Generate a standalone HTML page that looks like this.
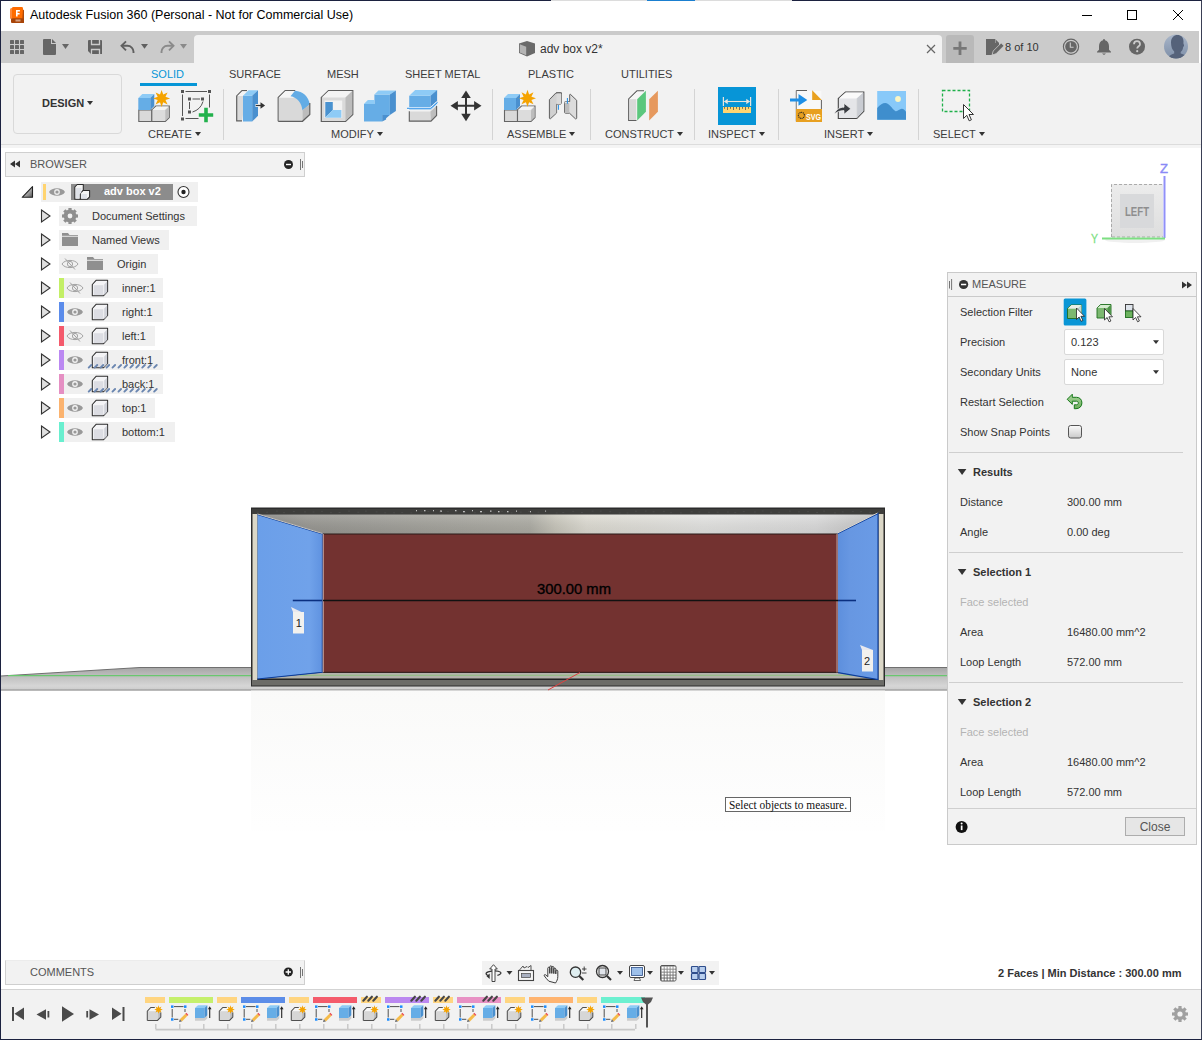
<!DOCTYPE html>
<html><head><meta charset="utf-8">
<style>
*{margin:0;padding:0;box-sizing:border-box}
html,body{width:1202px;height:1040px;overflow:hidden;background:#fff;font-family:"Liberation Sans",sans-serif;color:#3c3c3c}
.a{position:absolute}
.t{position:absolute;white-space:nowrap;font-size:11px;line-height:13px}
svg{position:absolute;overflow:visible}
#frame{position:absolute;left:0;top:0;width:1202px;height:1040px;border:1px solid #1c2240;border-right-color:#3a3f55;pointer-events:none;z-index:100}
.tab{font-size:11px;color:#3c3c3c}
.lbl{font-size:11px;color:#3c3c3c}
.dd{display:inline-block;width:0;height:0;border-left:3px solid transparent;border-right:3px solid transparent;border-top:4px solid #333;vertical-align:2px;margin-left:3px}
.sep{position:absolute;width:1px;background:#d4d4d4;top:89px;height:51px}
.row{position:absolute;height:20px;background:#f0f0f0}
.mrow{position:absolute;font-size:11px;color:#333}
</style></head><body>
<div id="frame"></div>
<div class="a" style="left:551px;top:0;width:241px;height:1px;background:#dcdcdc;z-index:101"></div>
<div class="a" style="left:647px;top:0;width:48px;height:1px;background:#1a7fd0;z-index:102"></div>

<!-- title bar -->
<div class="a" style="left:0;top:0;width:1202px;height:31px;background:#fff"></div>
<div class="t" style="left:30px;top:8px;font-size:12.5px;line-height:15px;color:#000">Autodesk Fusion 360 (Personal - Not for Commercial Use)</div>

<!-- tab bar -->
<div class="a" style="left:1px;top:31px;width:1198px;height:32px;background:#cbcbcb"></div>
<div class="a" style="left:194px;top:35px;width:748px;height:28px;background:#f2f2f2;border-radius:4px 4px 0 0"></div>
<div class="a" style="left:946px;top:35px;width:28px;height:28px;background:#b9b9b9;border-radius:3px 3px 0 0"></div>
<div class="t" style="left:540px;top:41.7px;font-size:12px;line-height:14px;color:#333">adv box v2*</div>
<div class="t" style="left:1005px;top:40.5px;font-size:11px;line-height:13px;color:#333">8 of 10</div>

<!-- ribbon -->
<div class="a" style="left:1px;top:63px;width:1200px;height:82px;background:#f2f2f2;border-bottom:1px solid #dcdcdc"></div>
<div class="a" style="left:1px;top:145px;width:1200px;height:3px;background:#f4f4f4"></div>
<div class="a" style="left:13px;top:74px;width:109px;height:60px;border:1px solid #d9d9d9;border-radius:4px"></div>
<div class="t" style="left:42px;top:97px;font-weight:bold;color:#333">DESIGN<span class="dd"></span></div>

<div class="t tab" style="left:151px;top:68px;color:#0696d7">SOLID</div>
<div class="a" style="left:140px;top:83px;width:57px;height:3px;background:#0696d7"></div>
<div class="t tab" style="left:229px;top:68px">SURFACE</div>
<div class="t tab" style="left:327px;top:68px">MESH</div>
<div class="t tab" style="left:405px;top:68px">SHEET METAL</div>
<div class="t tab" style="left:528px;top:68px">PLASTIC</div>
<div class="t tab" style="left:621px;top:68px">UTILITIES</div>

<div class="t lbl" style="left:148px;top:128px">CREATE<span class="dd"></span></div>
<div class="t lbl" style="left:331px;top:128px">MODIFY<span class="dd"></span></div>
<div class="t lbl" style="left:507px;top:128px">ASSEMBLE<span class="dd"></span></div>
<div class="t lbl" style="left:605px;top:128px">CONSTRUCT<span class="dd"></span></div>
<div class="t lbl" style="left:708px;top:128px">INSPECT<span class="dd"></span></div>
<div class="t lbl" style="left:824px;top:128px">INSERT<span class="dd"></span></div>
<div class="t lbl" style="left:933px;top:128px">SELECT<span class="dd"></span></div>

<div class="sep" style="left:223px"></div>
<div class="sep" style="left:492px"></div>
<div class="sep" style="left:590px"></div>
<div class="sep" style="left:694px"></div>
<div class="sep" style="left:778px"></div>
<div class="sep" style="left:918px"></div>

<!-- viewport content placeholder -->

<svg width="1202" height="1040" style="left:0;top:0" viewBox="0 0 1202 1040">
<defs>
<linearGradient id="gnd" x1="0" y1="0" x2="0" y2="1">
 <stop offset="0" stop-color="#a6a6a6"/><stop offset=".35" stop-color="#bdbdbd"/><stop offset=".8" stop-color="#d6d6d6"/><stop offset="1" stop-color="#cacaca"/>
</linearGradient>
<linearGradient id="ceil" x1="257" y1="0" x2="878" y2="0" gradientUnits="userSpaceOnUse">
 <stop offset="0" stop-color="#858581"/><stop offset=".08" stop-color="#999893"/><stop offset=".44" stop-color="#afaea6"/>
 <stop offset=".48" stop-color="#cac8bd"/><stop offset=".53" stop-color="#e0ded5"/><stop offset=".72" stop-color="#e6e6e4"/><stop offset=".9" stop-color="#dedede"/><stop offset="1" stop-color="#c4c4c4"/>
</linearGradient>
<linearGradient id="ceilv" x1="0" y1="514" x2="0" y2="534" gradientUnits="userSpaceOnUse">
 <stop offset="0" stop-color="#fff" stop-opacity=".15"/><stop offset="1" stop-color="#000" stop-opacity=".08"/>
</linearGradient>
<linearGradient id="bl" x1="0" y1="0" x2="1" y2="0">
 <stop offset="0" stop-color="#6b9fe9"/><stop offset=".8" stop-color="#70a2ea"/><stop offset="1" stop-color="#5f92e0"/>
</linearGradient>
<linearGradient id="br" x1="0" y1="0" x2="1" y2="0">
 <stop offset="0" stop-color="#5d8fdd"/><stop offset=".3" stop-color="#6797e2"/><stop offset="1" stop-color="#6a9be6"/>
</linearGradient>
<linearGradient id="refl" x1="0" y1="0" x2="0" y2="1">
 <stop offset="0" stop-color="#f9f9f8"/><stop offset="1" stop-color="#fefefe"/>
</linearGradient>
</defs>
<!-- ground plane -->
<path d="M1 676 L140 667.5 L947 667.5 L947 690.5 L1 690.5Z" fill="url(#gnd)"/>
<path d="M1 676 L140 667.5 L947 667.5" fill="none" stroke="#707070" stroke-width="1"/>
<path d="M1 690 H947" stroke="#8e8e8e" stroke-width="1"/>
<path d="M8 675.6 H947" stroke="#69c76f" stroke-width="1.1"/>
<!-- reflection below -->
<rect x="251" y="690.5" width="634" height="140" fill="url(#refl)" opacity=".9"/>
<!-- box -->
<rect x="251" y="507.5" width="634" height="179" fill="#2c2c2c"/>
<rect x="252" y="509" width="632" height="5" fill="#3e3e3c"/><rect x="416" y="510" width="1" height="1.3" fill="#d8d8d8" opacity=".85"/><rect x="424" y="510" width="1.5" height="1.3" fill="#d8d8d8" opacity=".85"/><rect x="433" y="510" width="1" height="1.3" fill="#d8d8d8" opacity=".85"/><rect x="440" y="510.5" width="2" height="1.3" fill="#d8d8d8" opacity=".85"/><rect x="455" y="510" width="1.5" height="1.3" fill="#d8d8d8" opacity=".85"/><rect x="463" y="511" width="2" height="1.3" fill="#d8d8d8" opacity=".85"/><rect x="472" y="510" width="1" height="1.3" fill="#d8d8d8" opacity=".85"/><rect x="480" y="511" width="2" height="1.3" fill="#d8d8d8" opacity=".85"/><rect x="490" y="510.5" width="1.5" height="1.3" fill="#d8d8d8" opacity=".85"/><rect x="498" y="511" width="1.5" height="1.3" fill="#d8d8d8" opacity=".85"/><rect x="507" y="511" width="1.5" height="1.3" fill="#d8d8d8" opacity=".85"/><rect x="516" y="510.5" width="1" height="1.3" fill="#d8d8d8" opacity=".85"/><rect x="530" y="511" width="1" height="1.3" fill="#d8d8d8" opacity=".85"/><rect x="545" y="510.5" width="1" height="1.3" fill="#d8d8d8" opacity=".85"/><rect x="256.7" y="511.6" width="2" height="1" fill="#555" opacity=".5"/><rect x="266.1" y="511.7" width="2" height="1" fill="#555" opacity=".5"/><rect x="275.9" y="510.6" width="2" height="1" fill="#555" opacity=".5"/><rect x="283.0" y="512.2" width="2" height="1" fill="#555" opacity=".5"/><rect x="292.8" y="511.0" width="2" height="1" fill="#555" opacity=".5"/><rect x="304.0" y="511.4" width="2" height="1" fill="#555" opacity=".5"/><rect x="312.5" y="511.5" width="2" height="1" fill="#555" opacity=".5"/><rect x="320.9" y="510.8" width="2" height="1" fill="#555" opacity=".5"/><rect x="329.9" y="512.2" width="2" height="1" fill="#555" opacity=".5"/><rect x="338.6" y="512.0" width="2" height="1" fill="#555" opacity=".5"/><rect x="348.0" y="510.6" width="2" height="1" fill="#555" opacity=".5"/><rect x="357.3" y="511.7" width="2" height="1" fill="#555" opacity=".5"/><rect x="364.9" y="510.6" width="2" height="1" fill="#555" opacity=".5"/><rect x="375.6" y="511.4" width="2" height="1" fill="#555" opacity=".5"/><rect x="384.2" y="512.3" width="2" height="1" fill="#555" opacity=".5"/><rect x="393.1" y="512.3" width="2" height="1" fill="#555" opacity=".5"/><rect x="401.2" y="512.1" width="2" height="1" fill="#555" opacity=".5"/><rect x="410.3" y="512.4" width="2" height="1" fill="#555" opacity=".5"/><rect x="420.6" y="510.7" width="2" height="1" fill="#555" opacity=".5"/><rect x="427.4" y="510.9" width="2" height="1" fill="#555" opacity=".5"/><rect x="438.9" y="511.4" width="2" height="1" fill="#555" opacity=".5"/><rect x="446.9" y="511.1" width="2" height="1" fill="#555" opacity=".5"/><rect x="455.5" y="511.3" width="2" height="1" fill="#555" opacity=".5"/><rect x="464.1" y="511.7" width="2" height="1" fill="#555" opacity=".5"/><rect x="473.8" y="512.3" width="2" height="1" fill="#555" opacity=".5"/><rect x="483.0" y="512.4" width="2" height="1" fill="#555" opacity=".5"/><rect x="492.6" y="512.5" width="2" height="1" fill="#555" opacity=".5"/><rect x="501.0" y="510.8" width="2" height="1" fill="#555" opacity=".5"/><rect x="510.6" y="512.4" width="2" height="1" fill="#555" opacity=".5"/><rect x="519.7" y="511.6" width="2" height="1" fill="#555" opacity=".5"/><rect x="528.1" y="510.9" width="2" height="1" fill="#555" opacity=".5"/><rect x="537.5" y="511.6" width="2" height="1" fill="#555" opacity=".5"/><rect x="544.9" y="510.6" width="2" height="1" fill="#555" opacity=".5"/><rect x="555.6" y="512.5" width="2" height="1" fill="#555" opacity=".5"/><rect x="562.3" y="512.1" width="2" height="1" fill="#555" opacity=".5"/><rect x="572.2" y="510.8" width="2" height="1" fill="#555" opacity=".5"/><rect x="580.9" y="512.0" width="2" height="1" fill="#555" opacity=".5"/><rect x="591.6" y="510.6" width="2" height="1" fill="#555" opacity=".5"/><rect x="599.8" y="510.6" width="2" height="1" fill="#555" opacity=".5"/><rect x="609.2" y="511.2" width="2" height="1" fill="#555" opacity=".5"/><rect x="618.6" y="512.5" width="2" height="1" fill="#555" opacity=".5"/><rect x="626.5" y="512.5" width="2" height="1" fill="#555" opacity=".5"/><rect x="634.9" y="510.7" width="2" height="1" fill="#555" opacity=".5"/><rect x="644.8" y="510.6" width="2" height="1" fill="#555" opacity=".5"/><rect x="652.6" y="511.3" width="2" height="1" fill="#555" opacity=".5"/><rect x="662.8" y="510.8" width="2" height="1" fill="#555" opacity=".5"/><rect x="670.1" y="512.2" width="2" height="1" fill="#555" opacity=".5"/><rect x="679.9" y="512.4" width="2" height="1" fill="#555" opacity=".5"/><rect x="690.7" y="511.3" width="2" height="1" fill="#555" opacity=".5"/><rect x="698.4" y="511.5" width="2" height="1" fill="#555" opacity=".5"/><rect x="707.9" y="511.7" width="2" height="1" fill="#555" opacity=".5"/><rect x="716.7" y="511.7" width="2" height="1" fill="#555" opacity=".5"/><rect x="726.8" y="511.5" width="2" height="1" fill="#555" opacity=".5"/><rect x="734.3" y="511.9" width="2" height="1" fill="#555" opacity=".5"/><rect x="742.7" y="511.1" width="2" height="1" fill="#555" opacity=".5"/><rect x="753.9" y="511.5" width="2" height="1" fill="#555" opacity=".5"/><rect x="761.6" y="510.5" width="2" height="1" fill="#555" opacity=".5"/><rect x="770.2" y="511.7" width="2" height="1" fill="#555" opacity=".5"/><rect x="778.1" y="511.7" width="2" height="1" fill="#555" opacity=".5"/><rect x="788.9" y="510.6" width="2" height="1" fill="#555" opacity=".5"/><rect x="797.9" y="511.4" width="2" height="1" fill="#555" opacity=".5"/><rect x="807.0" y="511.2" width="2" height="1" fill="#555" opacity=".5"/><rect x="816.1" y="512.0" width="2" height="1" fill="#555" opacity=".5"/><rect x="823.1" y="510.6" width="2" height="1" fill="#555" opacity=".5"/><rect x="834.0" y="512.4" width="2" height="1" fill="#555" opacity=".5"/><rect x="841.8" y="511.4" width="2" height="1" fill="#555" opacity=".5"/><rect x="851.8" y="511.1" width="2" height="1" fill="#555" opacity=".5"/><rect x="860.1" y="511.1" width="2" height="1" fill="#555" opacity=".5"/><rect x="869.1" y="511.7" width="2" height="1" fill="#555" opacity=".5"/><rect x="877.9" y="511.3" width="2" height="1" fill="#555" opacity=".5"/>
<rect x="252" y="680" width="632" height="5.5" fill="#6b6b67"/>
<rect x="252.5" y="514" width="5" height="166" fill="#dbd7c7"/>
<rect x="878.5" y="514" width="5" height="166" fill="#dbd7c7"/>
<!-- ceiling -->
<path d="M257 514.5 H878 L838 534 H323Z" fill="url(#ceil)"/>
<path d="M257 514.5 H878 L838 534 H323Z" fill="url(#ceilv)"/>
<!-- floor -->
<path d="M257 679 H878 L838 672.5 H323Z" fill="#b3b3ab"/>
<path d="M300 675.3 H860" stroke="#8fbf80" stroke-width="1"/>
<path d="M257 679 H878" stroke="#1a1a1a" stroke-width="1.2"/>
<!-- back wall -->
<rect x="323" y="534" width="515" height="138.5" fill="#733230"/>
<path d="M323 534 H838" stroke="#2a1a18" stroke-width="1.2"/>
<path d="M323 672.3 H838" stroke="#2a1a18" stroke-width="1"/>
<!-- red axis -->
<path d="M548 690 L580 672.5" stroke="#e04040" stroke-width="1"/>
<!-- left panel -->
<path d="M257.5 514.5 L322.5 534 L322.3 672.3 L257.5 679Z" fill="url(#bl)"/>
<path d="M257.5 514.5 L322.5 534 L322.3 672.3 L257.5 679" fill="none" stroke="#0b3d9c" stroke-width="1.1"/>
<path d="M257.5 514 L322.5 533.5" stroke="#c9c5bd" stroke-width="1"/>
<path d="M323.2 534 V672.3" stroke="#c5a39c" stroke-width="1.2"/>
<!-- right panel -->
<path d="M837.8 533.6 L878 513.5 L878 679.6 L838 672.6Z" fill="url(#br)"/>
<path d="M837.8 533.6 L878 513.5 L878 679.6 L838 672.6" fill="none" stroke="#0b3d9c" stroke-width="1.1"/>
<path d="M837.5 533 L877.5 513" stroke="#d5d1c9" stroke-width="1"/>
<path d="M837 534 V672.5" stroke="#c5a39c" stroke-width="1"/>
<!-- dimension line -->
<path d="M323 600.5 H838" stroke="#111" stroke-width="1.6"/>
<path d="M292.8 600.5 H322" stroke="#0a2f80" stroke-width="1.6"/>
<path d="M838 600.5 H856" stroke="#0a2f80" stroke-width="1.6"/>
<text x="537" y="594.2" font-family="Liberation Sans" font-size="14.7" fill="#000" stroke="#000" stroke-width=".35" textLength="74" lengthAdjust="spacingAndGlyphs">300.00 mm</text>
<!-- tags -->
<path d="M291 607 L301.5 612 L293 612Z" fill="#e8e8ee"/>
<rect x="293" y="612" width="11" height="21.5" fill="#f2f1ee"/>
<text x="295.8" y="626.5" font-family="Liberation Sans" font-size="11" fill="#222">1</text>
<path d="M860 645 L873 650 L862 650Z" fill="#e8e8ee"/>
<rect x="862" y="650" width="11" height="21.5" fill="#f2f1ee"/>
<text x="864" y="664.5" font-family="Liberation Sans" font-size="11" fill="#222">2</text>
<!-- view cube -->
<defs><linearGradient id="vc" x1="0" y1="0" x2="0" y2="1"><stop offset="0" stop-color="#ececec"/><stop offset="1" stop-color="#dedede"/></linearGradient></defs><rect x="1111" y="184" width="52" height="53" fill="url(#vc)"/><ellipse cx="1135" cy="240" rx="30" ry="3" fill="#000" opacity=".06"/>
<rect x="1120" y="194" width="34" height="34" fill="#d8d9db"/>
<path d="M1111.5 237V184.5H1163" fill="none" stroke="#9a9a9a" stroke-width=".8" stroke-dasharray="3 2"/>
<path d="M1112 237H1163" stroke="#999" stroke-width=".8" stroke-dasharray="3 2"/>
<text x="1137" y="215.5" text-anchor="middle" font-family="Liberation Sans" font-size="12" font-weight="bold" fill="#8e8e8e" textLength="24" lengthAdjust="spacingAndGlyphs">LEFT</text>
<path d="M1164.5 176V238" stroke="#9090f8" stroke-width="2"/>
<path d="M1102 238.5H1165" stroke="#7ddf82" stroke-width="2"/>
<text x="1160" y="173" font-family="Liberation Sans" font-size="13.5" fill="#8a8af6" stroke="#8a8af6" stroke-width=".4" textLength="8" lengthAdjust="spacingAndGlyphs">Z</text>
<text x="1091" y="243" font-family="Liberation Sans" font-size="13" fill="#7ddf84" stroke="#7ddf84" stroke-width=".3" textLength="7" lengthAdjust="spacingAndGlyphs">Y</text>
<!-- tooltip -->
<rect x="725.5" y="797.5" width="125" height="14" fill="#fff" stroke="#666" stroke-width="1"/>
<text x="729" y="808.5" font-family="Liberation Serif" font-size="11.5" fill="#111" textLength="118" lengthAdjust="spacingAndGlyphs">Select objects to measure.</text>
</svg>


<!-- browser -->
<div class="a" style="left:5px;top:152px;width:300px;height:25px;background:#f2f2f2;border:1px solid #cfcfcf"></div>
<div class="t" style="left:30px;top:158px;color:#555">BROWSER</div>
<div class="row" style="left:41px;top:182px;width:157px"></div>
<div class="a" style="left:43px;top:184px;width:3px;height:16px;background:#ffd470"></div>
<div class="a" style="left:71px;top:184px;width:102px;height:16px;background:#8c8c8c"></div>
<div class="t" style="left:104px;top:185px;font-weight:bold;color:#fff">adv box v2</div>
<div class="row" style="left:59px;top:206px;width:138px"></div>
<div class="t" style="left:92px;top:210px;color:#333">Document Settings</div>
<div class="row" style="left:59px;top:230px;width:110px"></div>
<div class="t" style="left:92px;top:234px;color:#333">Named Views</div>
<div class="row" style="left:59px;top:254px;width:99px"></div>
<div class="t" style="left:117px;top:258px;color:#333">Origin</div>
<div class="row" style="left:59px;top:278px;width:104px"></div>
<div class="a" style="left:59px;top:278px;width:5px;height:20px;background:#c3ef66"></div>
<div class="t" style="left:122px;top:282px;color:#333">inner:1</div>
<div class="row" style="left:59px;top:302px;width:104px"></div>
<div class="a" style="left:59px;top:302px;width:5px;height:20px;background:#5b8ceb"></div>
<div class="t" style="left:122px;top:306px;color:#333">right:1</div>
<div class="row" style="left:59px;top:326px;width:96px"></div>
<div class="a" style="left:59px;top:326px;width:5px;height:20px;background:#f45a6c"></div>
<div class="t" style="left:122px;top:330px;color:#333">left:1</div>
<div class="row" style="left:59px;top:350px;width:104px"></div>
<div class="a" style="left:59px;top:350px;width:5px;height:20px;background:#bb88f2"></div>
<div class="t" style="left:122px;top:354px;color:#333">front:1</div>
<div class="row" style="left:59px;top:374px;width:104px"></div>
<div class="a" style="left:59px;top:374px;width:5px;height:20px;background:#e58fc3"></div>
<div class="t" style="left:122px;top:378px;color:#333">back:1</div>
<div class="row" style="left:59px;top:398px;width:96px"></div>
<div class="a" style="left:59px;top:398px;width:5px;height:20px;background:#fbb36f"></div>
<div class="t" style="left:122px;top:402px;color:#333">top:1</div>
<div class="row" style="left:59px;top:422px;width:116px"></div>
<div class="a" style="left:59px;top:422px;width:5px;height:20px;background:#69efcf"></div>
<div class="t" style="left:122px;top:426px;color:#333">bottom:1</div>

<!-- measure panel -->
<div class="a" style="left:947px;top:272px;width:250px;height:573px;background:#f2f2f2;border:1px solid #cacaca"></div>
<div class="a" style="left:948px;top:296px;width:248px;height:1px;background:#cacaca"></div>
<div class="t" style="left:972px;top:278px;color:#555">MEASURE</div>
<div class="t" style="left:960px;top:305.6px;color:#333;">Selection Filter</div>
<div class="t" style="left:960px;top:335.6px;color:#333;">Precision</div>
<div class="t" style="left:960px;top:365.6px;color:#333;">Secondary Units</div>
<div class="t" style="left:960px;top:395.6px;color:#333;">Restart Selection</div>
<div class="t" style="left:960px;top:425.6px;color:#333;">Show Snap Points</div>
<div class="a" style="left:1064px;top:329px;width:100px;height:26px;background:#fff;border:1px solid #d9d9d9;border-radius:2px"></div>
<div class="t" style="left:1071px;top:335.8px;color:#333;">0.123</div>
<div class="a" style="left:1064px;top:359px;width:100px;height:26px;background:#fff;border:1px solid #d9d9d9;border-radius:2px"></div>
<div class="t" style="left:1071px;top:365.8px;color:#333;">None</div>
<div class="a" style="left:949px;top:452px;width:234px;height:1px;background:#cfcfcf"></div>
<div class="a" style="left:949px;top:552px;width:234px;height:1px;background:#cfcfcf"></div>
<div class="a" style="left:949px;top:682px;width:234px;height:1px;background:#cfcfcf"></div>
<div class="a" style="left:948px;top:808px;width:248px;height:1px;background:#cfcfcf"></div>
<div class="t" style="left:973px;top:465.6px;color:#333;font-weight:bold">Results</div>
<div class="t" style="left:973px;top:565.6px;color:#333;font-weight:bold">Selection 1</div>
<div class="t" style="left:973px;top:695.6px;color:#333;font-weight:bold">Selection 2</div>
<div class="t" style="left:960px;top:495.6px;color:#333;">Distance</div>
<div class="t" style="left:1067px;top:495.6px;color:#333;">300.00 mm</div>
<div class="t" style="left:960px;top:525.6px;color:#333;">Angle</div>
<div class="t" style="left:1067px;top:525.6px;color:#333;">0.00 deg</div>
<div class="t" style="left:960px;top:625.6px;color:#333;">Area</div>
<div class="t" style="left:1067px;top:625.6px;color:#333;">16480.00 mm^2</div>
<div class="t" style="left:960px;top:655.6px;color:#333;">Loop Length</div>
<div class="t" style="left:1067px;top:655.6px;color:#333;">572.00 mm</div>
<div class="t" style="left:960px;top:755.6px;color:#333;">Area</div>
<div class="t" style="left:1067px;top:755.6px;color:#333;">16480.00 mm^2</div>
<div class="t" style="left:960px;top:785.6px;color:#333;">Loop Length</div>
<div class="t" style="left:1067px;top:785.6px;color:#333;">572.00 mm</div>
<div class="t" style="left:960px;top:595.6px;color:#b4b4b4">Face selected</div>
<div class="t" style="left:960px;top:725.6px;color:#b4b4b4">Face selected</div>
<div class="a" style="left:1125px;top:817px;width:60px;height:19px;background:#e6e6e6;border:1px solid #adadad"></div>
<div class="t" style="left:1125px;top:820.5px;width:60px;text-align:center;font-size:12px;line-height:13px;color:#555">Close</div>

<!-- comments -->
<div class="a" style="left:5px;top:960px;width:300px;height:25px;background:#f2f2f2;border:1px solid #cfcfcf;border-top-color:#ececec"></div>
<div class="t" style="left:30px;top:966px;color:#555">COMMENTS</div>

<!-- timeline -->
<div class="a" style="left:1px;top:989px;width:1200px;height:50px;background:#f2f2f2;border-top:1px solid #d3d3d3"></div>
<div class="a" style="left:482px;top:961px;width:237px;height:24px;background:#f2f2f2"></div>
<div class="t" style="left:998px;top:966.6px;font-weight:bold;color:#333">2 Faces | Min Distance : 300.00 mm</div>

<!-- ICONS OVERLAY -->
<svg id="ov" width="1202" height="1040" style="left:0;top:0;z-index:50" viewBox="0 0 1202 1040">
<!-- fusion logo -->
<path d="M10 9.5a1.5 1.5 0 0 1 1.5-1.5h1v10.8h-2.5z" fill="#ff8a3a"/>
<rect x="12" y="7" width="11" height="12" rx="1.3" fill="#ff6c00"/>
<path d="M23 9.5l1 .8V23h-2z" fill="#b04a08"/>
<rect x="11" y="18.3" width="13" height="4.8" rx="1" fill="#a84408"/>
<path d="M16 10h3.9v1.6h-2.3v1.5h2v1.5h-2v1.8H16z" fill="#fff"/>
<rect x="15.5" y="19.5" width="5" height="2" fill="#e0b8a0" opacity=".8"/>
<!-- window controls -->
<path d="M1082 15.5h10" stroke="#000" stroke-width="1"/>
<rect x="1127.5" y="10.5" width="9" height="9" fill="none" stroke="#000" stroke-width="1"/>
<path d="M1173 10l10 10M1183 10l-10 10" stroke="#000" stroke-width="1"/>
<!-- grid -->
<g fill="#666"><rect x="10" y="40" width="4" height="4" rx=".6"/><rect x="15" y="40" width="4" height="4" rx=".6"/><rect x="20" y="40" width="4" height="4" rx=".6"/>
<rect x="10" y="45" width="4" height="4" rx=".6"/><rect x="15" y="45" width="4" height="4" rx=".6"/><rect x="20" y="45" width="4" height="4" rx=".6"/>
<rect x="10" y="50" width="4" height="4" rx=".6"/><rect x="15" y="50" width="4" height="4" rx=".6"/><rect x="20" y="50" width="4" height="4" rx=".6"/></g>
<!-- file -->
<path d="M44 39h7v5h5v10a1 1 0 0 1-1 1h-11a1 1 0 0 1-1-1v-14a1 1 0 0 1 1-1z" fill="#666"/>
<path d="M52 39l4 4h-4z" fill="#666"/>
<path d="M62 44h7l-3.5 5z" fill="#666"/>
<!-- save -->
<path d="M89 40h12a1 1 0 0 1 1 1v13h-11l-3-3v-10a1 1 0 0 1 1-1z" fill="#616161"/>
<path d="M91.5 40v4.5h8v-4.5" fill="none" stroke="#cbcbcb" stroke-width="1.3"/>
<path d="M91.5 54v-4.5h8v4.5" fill="none" stroke="#cbcbcb" stroke-width="1.3"/>
<!-- undo -->
<path d="M126 41.3l-4.5 4.5 4.5 4.5" fill="none" stroke="#606060" stroke-width="1.9"/>
<path d="M122 45.8h5.5a6 6 0 0 1 6 6v1.2" fill="none" stroke="#606060" stroke-width="1.9"/>
<path d="M141 44h7l-3.5 4.8z" fill="#606060"/>
<!-- redo -->
<path d="M169 41.3l4.5 4.5-4.5 4.5" fill="none" stroke="#8a8a8a" stroke-width="1.9"/>
<path d="M173 45.8h-5.5a6 6 0 0 0-6 6v1.2" fill="none" stroke="#8a8a8a" stroke-width="1.9"/>
<path d="M180 44h7l-3.5 4.8z" fill="#8a8a8a"/>
<!-- doc cube -->
<path d="M519 43.5l8-2.5 8 2.5v9.5l-8 3.5-8-3.5z" fill="#6a6a6a"/>
<path d="M519.8 44.3l6.4 2.4v8.6l-6.4-2.8z" fill="#b4b4b4"/>
<!-- tab close -->
<path d="M927 45l8 8M935 45l-8 8" stroke="#666" stroke-width="1.2"/>
<!-- plus -->
<path d="M960 41.5v13.5M953.3 48.3h13.4" stroke="#777" stroke-width="2.8"/>
<!-- 8 of 10 icon -->
<path d="M986 39h9l4 4v4l-7 7v1h-6z" fill="#666"/>
<path d="M995 39v4h4z" fill="#cbcbcb"/>
<path d="M995.5 39.5l3.5 3.5h-3.5z" fill="#666"/>
<path d="M992 55l1.2-4 8-8 2.8 2.8-8 8z" fill="#666" stroke="#cbcbcb" stroke-width=".8"/>
<!-- clock -->
<circle cx="1071" cy="46.7" r="7.6" fill="none" stroke="#666" stroke-width="1.2"/>
<circle cx="1071" cy="46.7" r="5.8" fill="#666"/>
<path d="M1070.3 42.5v4.8h3.3" fill="none" stroke="#cbcbcb" stroke-width="1.1"/>
<!-- bell -->
<path d="M1104 39c1 0 1 .8 1 1.2 2.8.8 4 3 4 6v3.5l2 2v.8h-14v-.8l2-2v-3.5c0-3 1.2-5.2 4-6 0-.4 0-1.2 1-1.2z" fill="#666"/>
<path d="M1102 53.5h4l-2 1.5z" fill="#666"/>
<!-- help -->
<circle cx="1137" cy="46.7" r="8" fill="#666"/>
<path d="M1134 44.2a3 3 0 0 1 6 0c0 2-2.8 2.2-2.8 4.3" fill="none" stroke="#cbcbcb" stroke-width="1.8"/>
<circle cx="1137.2" cy="51.2" r="1.1" fill="#cbcbcb"/>
<!-- avatar -->
<defs><linearGradient id="av" x1="0" y1="0" x2="0" y2="1"><stop offset="0" stop-color="#a9b6c9"/><stop offset="1" stop-color="#7e8fa8"/></linearGradient>
<clipPath id="avc"><circle cx="1176" cy="46.5" r="12"/></clipPath></defs>
<circle cx="1176" cy="46.5" r="12" fill="url(#av)"/>
<g clip-path="url(#avc)" fill="#55627a"><path d="M1171 42.5c0-5 3-7.5 6.5-7.5 3.8 0 6 2.5 6 6.5 0 1-.3 2 .3 3 .5 1 .2 2-.6 2.5-.3 2-1 4-2.5 5v1.5c3 .8 5.5 2 7 4.5v4h-20v-4c1.5-2.2 3.5-3.5 6.5-4.5v-2c-1.8-1.5-3.2-4.5-3.2-9z"/></g>
</svg>

<!-- RIBBON ICONS -->
<svg width="1202" height="1040" style="left:0;top:0;z-index:51" viewBox="0 0 1202 1040">
<defs>
<g id="star"><path d="M0-8.5L1.6-3.9 6-6 3.9-1.6 8.5 0 3.9 1.6 6 6 1.6 3.9 0 8.5-1.6 3.9-6 6-3.9 1.6-8.5 0-3.9-1.6-6-6-1.6-3.9z" fill="#f5a300"/></g>
<g id="newcomp">
 <!-- gray cubes -->
 <path d="M0.5 16v11.5h13V16z" fill="#d9d9d9" stroke="#656565" stroke-width="1.1"/>
 <path d="M13.5 27.5h13.5l4-4V12h-13.5l-4 4z" fill="#dcdcdc" stroke="#656565" stroke-width="1.1"/>
 <path d="M14 16l4-3.6h12.4l-4 3.6z" fill="#f4f4f4"/>
 <path d="M27 16.3l3.5-3.5v10.5l-3.5 3.7z" fill="#bdbdbd"/>
 <!-- blue cube -->
 <path d="M0 4h12v12H0z" fill="#65ade6"/>
 <path d="M0 4l4-4h12l-4 4z" fill="#8ecbf6"/>
 <path d="M12 4l4-4v12l-4 4z" fill="#4a90cf"/>
</g>
</defs>
<!-- CREATE -->
<use href="#newcomp" x="138.3" y="94"/>
<use href="#star" x="161.6" y="98.4"/>
<!-- sketch -->
<g fill="#555">
<rect x="181" y="90" width="3" height="3"/><rect x="208" y="90" width="3" height="3"/><rect x="181" y="117.5" width="3" height="3"/>
<rect x="188" y="97.5" width="3" height="3"/><rect x="201" y="97.5" width="3" height="3"/><rect x="188" y="110.5" width="3" height="3"/>
</g>
<g stroke="#555" stroke-width="1" fill="none">
<path d="M185.5 91.5h21.5M182.5 94.5v21.5M185.5 118.5h13M209.5 94.5v13M192.5 99h7.5M189.5 102v7M192.5 112c5-1.5 9-5 10.5-10.5"/>
</g>
<path d="M204.2 107.8h3.6v5.4h5.4v3.6h-5.4v5.4h-3.6v-5.4h-5.4v-3.6h5.4z" fill="#22b14c"/>
<!-- press pull -->
<path d="M242 120.8h-5.3V96l5.3-5.3h5" fill="#dadada" stroke="#5f5f5f" stroke-width="1.2"/>
<path d="M237.3 96l5-4.7h5v4.7z" fill="#f4f4f4"/>
<path d="M243 95.7h9.2v25.8H243z" fill="#66ade6"/>
<path d="M243 95.7l5.5-5.5h9.5l-5.8 5.5z" fill="#8ecbf6"/>
<path d="M252.2 95.7l5.8-5.5v25.6l-5.8 5.7z" fill="#4a90cf"/>
<path d="M255.5 105.5h5" stroke="#fff" stroke-width="3"/>
<path d="M255.8 105.5h5.5" stroke="#333" stroke-width="1.3"/>
<path d="M260.5 102.2l4.6 3.3-4.6 3.3z" fill="#333"/>
<!-- fillet -->
<path d="M278.2 121.3V97.6l7-7h10" fill="none" stroke="#5f5f5f" stroke-width="1.2"/>
<path d="M278.8 97.6h14c5 0 9 4 9.5 9.5v14.2h-23.5z" fill="#d9d9d9"/>
<path d="M279 97.4l6.5-6.3h9.5l-2 6.3z" fill="#f6f6f6"/>
<path d="M290.5 96.3l4.5-5.5c8 .6 13.5 5.5 14.8 13.6l-7.4 6.2c-.5-7.5-5.2-13.2-11.9-14.3z" fill="#63ace5"/>
<path d="M302.4 110.2l7.4-6v10.8l-7.4 6.5z" fill="#bcbcbc"/>
<path d="M278.2 121.3h24.3l7.3-6.8V103" fill="none" stroke="#5f5f5f" stroke-width="1.2"/>
<!-- shell -->
<path d="M321.3 121.5V97.5l7.2-7h24.3v24l-7.2 7z" fill="#dadada" stroke="#5f5f5f" stroke-width="1.2"/>
<path d="M321.8 97.4l6.9-6.4h23.6l-6.7 6.4z" fill="#f4f4f4"/>
<path d="M345.5 97.5l6.8-6.4v23.2l-6.8 6.6z" fill="#bcbcbc"/>
<rect x="324.5" y="100.5" width="17.7" height="17.5" fill="#f2f2f2"/>
<path d="M325.3 102h7.5v8l-7.5 7.5z" fill="#4992d0"/>
<path d="M325.3 117.7l7.5-7.7h8.6v7.7z" fill="#8ecbf6"/>
<!-- combine -->
<path d="M374.4 94.5h15.5v20.4h-7.7v6.7h-18.2v-17.6h10.4z" fill="#66ade6"/>
<path d="M374.4 94.5l4-4h17.5l-6 4z" fill="#8ecbf6"/>
<path d="M363.9 104l4-4h6.5v4z" fill="#8ecbf6"/>
<path d="M389.9 94.5l6-4v20.5l-6 4z" fill="#4a90cf"/>
<path d="M382.2 114.9h7.7l-3.8 3.3v1.2l-3.9 2.2z" fill="#4a90cf"/>
<!-- split -->
<path d="M409.2 95.8h21.3v14.2h-21.3z" fill="#66ade6"/>
<path d="M409.2 95.8l6-5.8h22l-6.6 5.8z" fill="#8ecbf6"/>
<path d="M430.5 95.8l6.6-5.8v14.7l-6.6 5.5z" fill="#4a90cf"/>
<path d="M407 108.3h24l6.5-6" fill="none" stroke="#fff" stroke-width="2.6"/>
<path d="M407 108.3h24l6.5-6" fill="none" stroke="#1e88e5" stroke-width="1.1"/>
<path d="M409.2 111.5h21.3l6-5.5v9.5l-5.5 5.5h-21.8z" fill="#d9d9d9"/>
<path d="M430.5 111.5l6-5.5v9.5l-5.5 5.5z" fill="#bdbdbd"/>
<path d="M409.3 111.2v9.9h21.7l5.6-5.6v-9.4" fill="none" stroke="#5f5f5f" stroke-width="1.1"/>
<!-- move -->
<g fill="#333">
<path d="M466 90.5l-4.8 7.4h9.6z"/><path d="M466 121.2l-4.8-7.4h9.6z"/>
<path d="M450.5 105.8l7.4-4.8v9.6z"/><path d="M481.5 105.8l-7.4-4.8v9.6z"/>
</g>
<path d="M466 96v19.5M456 105.8h20" stroke="#333" stroke-width="2"/>
<!-- ASSEMBLE -->
<use href="#newcomp" x="504" y="94"/>
<use href="#star" x="527.5" y="98.3"/>
<!-- joint -->
<path d="M549.4 118V99.6l6.6-6.8h5.5v10.5l-1 .8h-3.9v8.9l-6 5.6c-.6.5-1.2.1-1.2-.6z" fill="#c6c6c6" stroke="#606060" stroke-width="1" stroke-linejoin="round"/>
<path d="M550.4 100l6-6v18.8l-6 5.2z" fill="#dcdcdc" opacity=".5"/>
<path d="M556.3 93.5h5v10c-1 .8-4 .8-5 0z" fill="#dadada"/>
<path d="M556.3 93.2c.3-.8 4.7-.8 5 0" fill="none" stroke="#606060" stroke-width=".8"/>
<path d="M558.4 105v4.8" stroke="#1e8ce6" stroke-width="1"/>
<path d="M570.4 94.3l6.3 6v17.6c0 .9-.8 1.4-1.4.8l-5.8-5.5h-4c-.7 0-1-.5-1-1.2v-9.4c0-.7.4-1 1-1h4.2v-6.8c0-.6.4-.8.7-.5z" fill="#dcdcdc" stroke="#606060" stroke-width="1" stroke-linejoin="round"/>
<path d="M564.8 103h4.5v10h-4.5z" fill="#bdbdbd"/>
<path d="M564.6 102.8c.5-.8 4.3-.8 4.8 0" fill="none" stroke="#f4f4f4" stroke-width=".9"/>
<path d="M567.4 98v5.7" stroke="#1e8ce6" stroke-width="1"/>
<!-- CONSTRUCT -->
<path d="M636.5 120.5h-7.8V99.1l8.3-8.3h7" fill="none" stroke="#5f5f5f" stroke-width="1.2"/>
<rect x="629.3" y="99.2" width="6.9" height="20.8" fill="#d9d9d9"/>
<path d="M629.3 99l8-7.6h7l-7 7.6z" fill="#f6f6f6"/>
<path d="M637.2 99.2l8.7-8.4v21l-8.7 8.7z" fill="#5bc77d"/>
<path d="M649.2 99.2l8.7-8.4v21l-8.7 8.7z" fill="#e6995e"/>
<!-- INSPECT -->
<rect x="718" y="87" width="38" height="38" fill="#0795d7"/>
<path d="M723.4 97v9M750.6 97v9" stroke="#e8e4dc" stroke-width="1.2"/>
<path d="M724.5 101.5h25" stroke="#e8e4dc" stroke-width="1.1"/>
<path d="M724 101.5l3.7-2.8v5.6zM750 101.5l-3.7-2.8v5.6z" fill="#e8e4dc"/>
<rect x="723" y="107" width="28" height="6" fill="#ffd672"/>
<path d="M724.5 107v1.8M727.5 107v3M730.5 107v1.8M733.5 107v3M736.5 107v1.8M739.5 107v3M742.5 107v1.8M745.5 107v3M748.5 107v1.8" stroke="#555" stroke-width=".8"/>
<!-- INSERT svg -->
<path d="M796.3 121.5V90.5h10.7" fill="none" stroke="#5f5f5f" stroke-width="1"/>
<rect x="796.8" y="91" width="24.5" height="18" fill="#f8f8f8"/>
<path d="M812.2 90.3v9.7h9.5z" fill="#e9a11f"/>
<path d="M821.4 100v9" stroke="#5f5f5f" stroke-width="1"/>
<rect x="796" y="109" width="26" height="13" fill="#e8a021"/>
<circle cx="801.4" cy="115.4" r="3" fill="none" stroke="#222" stroke-width="1.1" stroke-dasharray="1 .7"/>
<text x="806" y="119.6" font-family="Liberation Sans" font-weight="bold" font-size="9.5" fill="#fff" textLength="15" lengthAdjust="spacingAndGlyphs">SVG</text>
<path d="M790 98.4h8.5v-4.3l8.8 5.8-8.8 5.8v-4.3H790z" fill="#1e8fe6"/>
<!-- insert mesh -->
<path d="M838.3 118.5V98.5l7.2-6.5h18.3v19.3l-7 7.2z" fill="#e4e5e8" stroke="#444" stroke-width="1.1"/>
<path d="M838.8 98.5l6.8-6h17.8l-6.6 6z" fill="#fafafa"/>
<path d="M856.8 98.5l6.6-6v18.4l-6.6 7z" fill="#c9ccd2"/>
<path d="M856.8 98.5v19.7" stroke="#ddd" stroke-width=".6"/>
<path d="M834.3 114C836 109.8 839.5 107.2 844 107.2V103.3L850.8 108.8L844 114.3V110.6C840 110.6 837 111.8 834.3 114Z" fill="#3a3d42" stroke="#f4f4f4" stroke-width=".7"/>
<!-- image -->
<rect x="877.2" y="91" width="28.8" height="28.7" fill="#88c9f9"/>
<path d="M877.2 108c3-3.5 5.5-5 8-5 4 0 7 6 10 8 2 1.3 4-2.2 6.5-2.2 2 0 3.3 1.5 4.3 3v8H877.2z" fill="#3f8ecd"/>
<circle cx="898" cy="99" r="2.9" fill="#fbf6c4"/>
<!-- SELECT -->
<rect x="942.5" y="90.5" width="27" height="21" fill="none" stroke="#1fb04a" stroke-width="1.3" stroke-dasharray="3 2"/>
<path d="M963.5 104.5v14l3.3-3.2 2.4 5.5 2.2-1-2.4-5.3h4.5z" fill="#fff" stroke="#333" stroke-width="1"/>
</svg>
<svg width="1202" height="1040" style="left:0;top:0;z-index:52" viewBox="0 0 1202 1040">
<path d="M10 164l5-3.5v7zM15 164l5-3.5v7z" fill="#333"/>
<circle cx="288.5" cy="164.5" r="4.5" fill="#262626"/><path d="M286 164.5h5" stroke="#fff" stroke-width="1.4"/>
<path d="M300.5 159v11M302.5 161v7" stroke="#666" stroke-width=".9"/>
<defs><linearGradient id="rt" x1="0" y1="0" x2="1" y2="1"><stop offset="0.3" stop-color="#d8d8d8"/><stop offset="1" stop-color="#555"/></linearGradient></defs><path d="M22.2 197.3L32.5 186.6V197.3Z" fill="url(#rt)" stroke="#222" stroke-width="1.1" stroke-linejoin="round"/>
<g transform="translate(57,192)"><path d="M-8 0C-5.5 -5 5.5 -5 8 0C5.5 5 -5.5 5 -8 0Z" fill="#999"/><circle r="2.9" fill="#ececec"/><circle r="1.6" fill="#999"/></g>
<path d="M74.8 199.3v-12.3l2.4-2.5h6.1v5.8l-3 3v6z" fill="#f4f4f4" stroke="#2a2a2a" stroke-width="1.05" stroke-linejoin="round"/>
<path d="M80.3 199.3v-6l2.8-2.8h6.5v6.3l-2.5 2.5z" fill="#f4f4f4" stroke="#2a2a2a" stroke-width="1.05" stroke-linejoin="round"/>
<path d="M75.8 188h5.6v4.5l-1.8 1.8v4.2h-3.8z" fill="#dfe2e8"/><path d="M81.3 194h5.6v4.6h-5.6z" fill="#dfe2e8"/>

<circle cx="183.5" cy="192" r="5.5" fill="#fff" stroke="#333" stroke-width="1.1"/><circle cx="183.5" cy="192" r="2.2" fill="#222"/>
<path d="M41.5 210L50 216L41.5 222Z" fill="#e0e0e0" stroke="#333" stroke-width="1.1"/>
<path d="M41.5 234L50 240L41.5 246Z" fill="#e0e0e0" stroke="#333" stroke-width="1.1"/>
<path d="M41.5 258L50 264L41.5 270Z" fill="#e0e0e0" stroke="#333" stroke-width="1.1"/>
<path d="M41.5 282L50 288L41.5 294Z" fill="#e0e0e0" stroke="#333" stroke-width="1.1"/>
<path d="M41.5 306L50 312L41.5 318Z" fill="#e0e0e0" stroke="#333" stroke-width="1.1"/>
<path d="M41.5 330L50 336L41.5 342Z" fill="#e0e0e0" stroke="#333" stroke-width="1.1"/>
<path d="M41.5 354L50 360L41.5 366Z" fill="#e0e0e0" stroke="#333" stroke-width="1.1"/>
<path d="M41.5 378L50 384L41.5 390Z" fill="#e0e0e0" stroke="#333" stroke-width="1.1"/>
<path d="M41.5 402L50 408L41.5 414Z" fill="#e0e0e0" stroke="#333" stroke-width="1.1"/>
<path d="M41.5 426L50 432L41.5 438Z" fill="#e0e0e0" stroke="#333" stroke-width="1.1"/>
<g fill="#8f8f8f"><circle cx="70" cy="216" r="6.4"/><rect x="68.4" y="208" width="3.2" height="4" transform="rotate(0 70 216)"/><rect x="68.4" y="208" width="3.2" height="4" transform="rotate(45 70 216)"/><rect x="68.4" y="208" width="3.2" height="4" transform="rotate(90 70 216)"/><rect x="68.4" y="208" width="3.2" height="4" transform="rotate(135 70 216)"/><rect x="68.4" y="208" width="3.2" height="4" transform="rotate(180 70 216)"/><rect x="68.4" y="208" width="3.2" height="4" transform="rotate(225 70 216)"/><rect x="68.4" y="208" width="3.2" height="4" transform="rotate(270 70 216)"/><rect x="68.4" y="208" width="3.2" height="4" transform="rotate(315 70 216)"/></g><circle cx="70" cy="216" r="2.4" fill="#f2f2f2"/>
<path d="M62 233h6l1.5 2h8.5v11h-16z" fill="#8f8f8f"/><path d="M62 236.3h16" stroke="#f2f2f2" stroke-width=".9"/>
<path d="M87 257h6l1.5 2h8.5v11h-16z" fill="#8f8f8f"/><path d="M87 260.3h16" stroke="#f2f2f2" stroke-width=".9"/>
<g transform="translate(70,264)" fill="none" stroke="#a3a3a3" stroke-width="1"><path d="M-8 0C-5.5 -4.8 5.5 -4.8 8 0C5.5 4.8 -5.5 4.8 -8 0Z"/><circle r="2.6"/><path d="M-5 -5.5L5 5.5"/></g>
<g transform="translate(75,288)" fill="none" stroke="#a3a3a3" stroke-width="1"><path d="M-8 0C-5.5 -4.8 5.5 -4.8 8 0C5.5 4.8 -5.5 4.8 -8 0Z"/><circle r="2.6"/><path d="M-5 -5.5L5 5.5"/></g>
<path d="M92.3 295.7v-11.2l4-4.3h11.3v11.3l-4 4.2z" fill="#f4f4f6" stroke="#2e2e2e" stroke-width="1.05" stroke-linejoin="round"/>
<path d="M93.8 285.2h9.5v9.8h-9.5z" fill="#dcdde3"/>
<path d="M104.2 284.6l2.9-3v10.2l-2.9 3.1z" fill="#d0d2d9"/>
<g transform="translate(75,312)"><path d="M-8 0C-5.5 -5 5.5 -5 8 0C5.5 5 -5.5 5 -8 0Z" fill="#999"/><circle r="2.9" fill="#f2f2f2"/><circle r="1.6" fill="#999"/></g>
<path d="M92.3 319.7v-11.2l4-4.3h11.3v11.3l-4 4.2z" fill="#f4f4f6" stroke="#2e2e2e" stroke-width="1.05" stroke-linejoin="round"/>
<path d="M93.8 309.2h9.5v9.8h-9.5z" fill="#dcdde3"/>
<path d="M104.2 308.6l2.9-3v10.2l-2.9 3.1z" fill="#d0d2d9"/>
<g transform="translate(75,336)" fill="none" stroke="#a3a3a3" stroke-width="1"><path d="M-8 0C-5.5 -4.8 5.5 -4.8 8 0C5.5 4.8 -5.5 4.8 -8 0Z"/><circle r="2.6"/><path d="M-5 -5.5L5 5.5"/></g>
<path d="M92.3 343.7v-11.2l4-4.3h11.3v11.3l-4 4.2z" fill="#f4f4f6" stroke="#2e2e2e" stroke-width="1.05" stroke-linejoin="round"/>
<path d="M93.8 333.2h9.5v9.8h-9.5z" fill="#dcdde3"/>
<path d="M104.2 332.6l2.9-3v10.2l-2.9 3.1z" fill="#d0d2d9"/>
<g transform="translate(75,360)"><path d="M-8 0C-5.5 -5 5.5 -5 8 0C5.5 5 -5.5 5 -8 0Z" fill="#999"/><circle r="2.9" fill="#f2f2f2"/><circle r="1.6" fill="#999"/></g>
<path d="M92.3 367.7v-11.2l4-4.3h11.3v11.3l-4 4.2z" fill="#f4f4f6" stroke="#2e2e2e" stroke-width="1.05" stroke-linejoin="round"/>
<path d="M93.8 357.2h9.5v9.8h-9.5z" fill="#dcdde3"/>
<path d="M104.2 356.6l2.9-3v10.2l-2.9 3.1z" fill="#d0d2d9"/>
<g transform="translate(75,384)"><path d="M-8 0C-5.5 -5 5.5 -5 8 0C5.5 5 -5.5 5 -8 0Z" fill="#999"/><circle r="2.9" fill="#f2f2f2"/><circle r="1.6" fill="#999"/></g>
<path d="M92.3 391.7v-11.2l4-4.3h11.3v11.3l-4 4.2z" fill="#f4f4f6" stroke="#2e2e2e" stroke-width="1.05" stroke-linejoin="round"/>
<path d="M93.8 381.2h9.5v9.8h-9.5z" fill="#dcdde3"/>
<path d="M104.2 380.6l2.9-3v10.2l-2.9 3.1z" fill="#d0d2d9"/>
<g transform="translate(75,408)"><path d="M-8 0C-5.5 -5 5.5 -5 8 0C5.5 5 -5.5 5 -8 0Z" fill="#999"/><circle r="2.9" fill="#f2f2f2"/><circle r="1.6" fill="#999"/></g>
<path d="M92.3 415.7v-11.2l4-4.3h11.3v11.3l-4 4.2z" fill="#f4f4f6" stroke="#2e2e2e" stroke-width="1.05" stroke-linejoin="round"/>
<path d="M93.8 405.2h9.5v9.8h-9.5z" fill="#dcdde3"/>
<path d="M104.2 404.6l2.9-3v10.2l-2.9 3.1z" fill="#d0d2d9"/>
<g transform="translate(75,432)"><path d="M-8 0C-5.5 -5 5.5 -5 8 0C5.5 5 -5.5 5 -8 0Z" fill="#999"/><circle r="2.9" fill="#f2f2f2"/><circle r="1.6" fill="#999"/></g>
<path d="M92.3 439.7v-11.2l4-4.3h11.3v11.3l-4 4.2z" fill="#f4f4f6" stroke="#2e2e2e" stroke-width="1.05" stroke-linejoin="round"/>
<path d="M93.8 429.2h9.5v9.8h-9.5z" fill="#dcdde3"/>
<path d="M104.2 428.6l2.9-3v10.2l-2.9 3.1z" fill="#d0d2d9"/>
<path d="M88.70 367.6l2.6-2.6M94.65 367.6l2.6-2.6M100.60 367.6l2.6-2.6M106.55 367.6l2.6-2.6M112.50 367.6l2.6-2.6M118.45 367.6l2.6-2.6M124.40 367.6l2.6-2.6M130.35 367.6l2.6-2.6M136.30 367.6l2.6-2.6M142.25 367.6l2.6-2.6M148.20 367.6l2.6-2.6M154.15 367.6l2.6-2.6" stroke="#6a86b0" stroke-width="1.9" stroke-linecap="round"/>
<path d="M88.70 391.6l2.6-2.6M94.65 391.6l2.6-2.6M100.60 391.6l2.6-2.6M106.55 391.6l2.6-2.6M112.50 391.6l2.6-2.6M118.45 391.6l2.6-2.6M124.40 391.6l2.6-2.6M130.35 391.6l2.6-2.6M136.30 391.6l2.6-2.6M142.25 391.6l2.6-2.6M148.20 391.6l2.6-2.6M154.15 391.6l2.6-2.6" stroke="#6a86b0" stroke-width="1.9" stroke-linecap="round"/>
</svg>
<svg width="1202" height="1040" style="left:0;top:0;z-index:53" viewBox="0 0 1202 1040">
<path d="M949.5 281v7.5M951.6 279v11" stroke="#666" stroke-width=".9"/>
<circle cx="963.6" cy="284.5" r="4.6" fill="#333"/><path d="M961 284.5h5.2" stroke="#fff" stroke-width="1.5"/>
<path d="M1182 281.5l5 3.5-5 3.5zM1187 281.5l5 3.5-5 3.5z" fill="#333"/>
<rect x="1063.7" y="298.5" width="22.7" height="27" rx="1.5" fill="#0a96d6"/>
<path d="M1067.5 308.5l3.5-3.5h10.5v10l-3.5 3.5h-10.5z" fill="#7cb870" stroke="#1e6e1e" stroke-width=".9"/><path d="M1068.0 308.5l3.2-3h10l-3.2 3z" fill="#d6ecd0"/><path d="M1078.0 308.5l3-3v9.5l-3 3z" fill="#4f9449"/>
<path d="M1068 308.5l3.5-3.5h10l-3.5 3.5z" fill="#e8eee6"/><path d="M1078 308.5l3.5-3.5v10l-3.5 3.5z" fill="#c5d8d9"/>
<path d="M1076.5 308v11.5l2.6-2.5 2 4.3 1.8-.8-2-4.2h3.6z" fill="#fff" stroke="#222" stroke-width=".8"/>
<path d="M1097 308l3.5-3.5h10.5v10l-3.5 3.5h-10.5z" fill="#7cb870" stroke="#1e6e1e" stroke-width=".9"/><path d="M1097.5 308l3.2-3h10l-3.2 3z" fill="#d6ecd0"/><path d="M1107.5 308l3-3v9.5l-3 3z" fill="#4f9449"/>
<path d="M1104.5 308.5v11.5l2.6-2.5 2 4.3 1.8-.8-2-4.2h3.6z" fill="#fff" stroke="#222" stroke-width=".8"/>
<rect x="1125.5" y="304.5" width="7.5" height="6.5" fill="#dde3ea" stroke="#333" stroke-width=".9"/><rect x="1125.5" y="311" width="7.5" height="6.5" fill="#6db35f" stroke="#1e6e1e" stroke-width=".9"/>
<path d="M1133 308.5v11.5l2.6-2.5 2 4.3 1.8-.8-2-4.2h3.6z" fill="#fff" stroke="#222" stroke-width=".8"/>
<path d="M1153 340.2h6l-3 3.8z" fill="#333"/>
<path d="M1153 370.2h6l-3 3.8z" fill="#333"/>
<defs><linearGradient id="rs" x1="0" y1="0" x2="0" y2="1"><stop offset="0" stop-color="#a8d49a"/><stop offset="1" stop-color="#6eae5e"/></linearGradient></defs>
<path d="M1067.2 399.3L1072.3 394.2V397.3H1076.5C1079.8 397.3 1081.9 399.6 1081.9 402.9C1081.9 406.3 1079.5 408.7 1076 408.7H1074.3V404.8H1076.5C1077.6 404.8 1078.3 404 1078.3 403C1078.3 402 1077.6 401.2 1076.5 401.2H1072.3V404.4Z" fill="url(#rs)" stroke="#17781a" stroke-width="1" stroke-linejoin="round"/>
<defs><linearGradient id="cb" x1="0" y1="0" x2="0" y2="1"><stop offset="0" stop-color="#fbfbfb"/><stop offset="1" stop-color="#c9c9c9"/></linearGradient></defs>
<rect x="1068.5" y="425.5" width="13" height="12.5" rx="2.2" fill="url(#cb)" stroke="#555" stroke-width="1"/>
<path d="M957.8 469h8.6l-4.3 6z" fill="#333"/>
<path d="M957.8 569h8.6l-4.3 6z" fill="#333"/>
<path d="M957.8 699h8.6l-4.3 6z" fill="#333"/>
<circle cx="961.6" cy="827" r="6" fill="#111"/><rect x="960.8" y="825.5" width="1.7" height="4.6" fill="#fff"/><circle cx="961.65" cy="823.5" r="1" fill="#fff"/>
</svg>
<svg width="1202" height="1040" style="left:0;top:0;z-index:54" viewBox="0 0 1202 1040">
<circle cx="288.3" cy="972" r="4.6" fill="#222"/><path d="M285.6 972h5.4M288.3 969.3v5.4" stroke="#fff" stroke-width="1.3"/>
<path d="M300.5 967v11M302.5 969v7" stroke="#666" stroke-width=".9"/>
<g fill="#4a4a4a"><rect x="12" y="1007" width="2" height="14"/><path d="M24 1007.5v12.5l-9.5-6.25z"/><path d="M46 1009.3v10.5l-9.5-5.25z"/><rect x="47.5" y="1011" width="1.8" height="6.5"/><path d="M62 1006.3v15.4l12-7.7z"/><rect x="86.3" y="1011" width="1.8" height="6.5"/><path d="M89.5 1009.3v10.5l9.5-5.25z"/><path d="M112 1007.5v12.5l9.5-6.25z"/><rect x="122.5" y="1007" width="2" height="14"/></g>
<rect x="145" y="997" width="20" height="6" fill="#ffd580"/>
<rect x="169" y="997" width="44" height="6" fill="#c5f06c"/>
<rect x="217" y="997" width="20" height="6" fill="#ffd580"/>
<rect x="241" y="997" width="44" height="6" fill="#5c8de8"/>
<rect x="289" y="997" width="20" height="6" fill="#ffd580"/>
<rect x="313" y="997" width="44" height="6" fill="#f45b6b"/>
<rect x="361" y="997" width="20" height="6" fill="#ffd580"/>
<path d="M363.3 1000.7l3.6-4M368.3 1000.7l3.6-4M373.3 1000.7l3.6-4" stroke="#474747" stroke-width="2.1" stroke-linecap="round"/>
<rect x="385" y="997" width="44" height="6" fill="#bb88f0"/>
<path d="M411.3 1000.7l3.6-4M416.3 1000.7l3.6-4M421.3 1000.7l3.6-4" stroke="#474747" stroke-width="2.1" stroke-linecap="round"/>
<rect x="433" y="997" width="20" height="6" fill="#ffd580"/>
<path d="M435.3 1000.7l3.6-4M440.3 1000.7l3.6-4M445.3 1000.7l3.6-4" stroke="#474747" stroke-width="2.1" stroke-linecap="round"/>
<rect x="457" y="997" width="44" height="6" fill="#e891c4"/>
<path d="M483.3 1000.7l3.6-4M488.3 1000.7l3.6-4M493.3 1000.7l3.6-4" stroke="#474747" stroke-width="2.1" stroke-linecap="round"/>
<rect x="505" y="997" width="20" height="6" fill="#ffd580"/>
<rect x="529" y="997" width="44" height="6" fill="#ffb470"/>
<rect x="577" y="997" width="20" height="6" fill="#ffd580"/>
<rect x="601" y="997" width="44" height="6" fill="#6cf0d0"/>
<path d="M147.60000000000002 1011.2h10.5v9.2h-10.5z" fill="#d6d6d6"/><path d="M147.8 1011l3.4-3.4h6.2l-.3 3.4z" fill="#f6f6f6"/><path d="M158.10000000000002 1011.3l2.6-.3v6l-2.6 3z" fill="#bcbcbc"/><path d="M147.3 1020.4v-9.3l3.5-3.6h4" fill="none" stroke="#505050" stroke-width="1.05"/><path d="M147.3 1020.4h10.2l3.3-3.3v-4.5" fill="none" stroke="#505050" stroke-width="1.05"/><use href="#star" transform="translate(158.5 1009.6) scale(.5)"/>
<path d="M174 1006.6h9.5M172.2 1009v8.5M185 1009v3M174 1019.3h4.3" stroke="#505050" stroke-width="1"/><g fill="#1a8cff"><rect x="171" y="1005.4" width="2.5" height="2.5"/><rect x="184" y="1005.4" width="2.5" height="2.5"/><rect x="171" y="1018.2" width="2.5" height="2.5"/></g><path d="M179.8 1019.3l5.6-5.6 2.1 2.1-5.6 5.6z" fill="#f5bb4a"/><path d="M185.4 1013.7l.9-.9 2.1 2.1-.9.9z" fill="#e8404a"/><path d="M179.8 1019.3l-.8 2.8 2.9-.7z" fill="#666"/>
<path d="M195 1018h9.5l2.8-2.6v3l-2.6 2.3H195z" fill="#cdcdcd"/><path d="M195 1008h9.5v10H195z" fill="#66ade6"/><path d="M195 1008l3-2.8h9.3l-2.8 2.8z" fill="#8ecbf6"/><path d="M204.5 1008l2.8-2.8v10l-2.8 2.8z" fill="#4a90cf"/><path d="M209.7 1018v-9.5" stroke="#222" stroke-width="1.1"/><path d="M207.9 1009.3l1.8-3 1.8 3z" fill="#222"/>
<path d="M219.60000000000002 1011.2h10.5v9.2h-10.5z" fill="#d6d6d6"/><path d="M219.8 1011l3.4-3.4h6.2l-.3 3.4z" fill="#f6f6f6"/><path d="M230.10000000000002 1011.3l2.6-.3v6l-2.6 3z" fill="#bcbcbc"/><path d="M219.3 1020.4v-9.3l3.5-3.6h4" fill="none" stroke="#505050" stroke-width="1.05"/><path d="M219.3 1020.4h10.2l3.3-3.3v-4.5" fill="none" stroke="#505050" stroke-width="1.05"/><use href="#star" transform="translate(230.5 1009.6) scale(.5)"/>
<path d="M246 1006.6h9.5M244.2 1009v8.5M257 1009v3M246 1019.3h4.3" stroke="#505050" stroke-width="1"/><g fill="#1a8cff"><rect x="243" y="1005.4" width="2.5" height="2.5"/><rect x="256" y="1005.4" width="2.5" height="2.5"/><rect x="243" y="1018.2" width="2.5" height="2.5"/></g><path d="M251.8 1019.3l5.6-5.6 2.1 2.1-5.6 5.6z" fill="#f5bb4a"/><path d="M257.4 1013.7l.9-.9 2.1 2.1-.9.9z" fill="#e8404a"/><path d="M251.8 1019.3l-.8 2.8 2.9-.7z" fill="#666"/>
<path d="M267 1018h9.5l2.8-2.6v3l-2.6 2.3H267z" fill="#cdcdcd"/><path d="M267 1008h9.5v10H267z" fill="#66ade6"/><path d="M267 1008l3-2.8h9.3l-2.8 2.8z" fill="#8ecbf6"/><path d="M276.5 1008l2.8-2.8v10l-2.8 2.8z" fill="#4a90cf"/><path d="M281.7 1018v-9.5" stroke="#222" stroke-width="1.1"/><path d="M279.9 1009.3l1.8-3 1.8 3z" fill="#222"/>
<path d="M291.6 1011.2h10.5v9.2h-10.5z" fill="#d6d6d6"/><path d="M291.8 1011l3.4-3.4h6.2l-.3 3.4z" fill="#f6f6f6"/><path d="M302.1 1011.3l2.6-.3v6l-2.6 3z" fill="#bcbcbc"/><path d="M291.3 1020.4v-9.3l3.5-3.6h4" fill="none" stroke="#505050" stroke-width="1.05"/><path d="M291.3 1020.4h10.2l3.3-3.3v-4.5" fill="none" stroke="#505050" stroke-width="1.05"/><use href="#star" transform="translate(302.5 1009.6) scale(.5)"/>
<path d="M318 1006.6h9.5M316.2 1009v8.5M329 1009v3M318 1019.3h4.3" stroke="#505050" stroke-width="1"/><g fill="#1a8cff"><rect x="315" y="1005.4" width="2.5" height="2.5"/><rect x="328" y="1005.4" width="2.5" height="2.5"/><rect x="315" y="1018.2" width="2.5" height="2.5"/></g><path d="M323.8 1019.3l5.6-5.6 2.1 2.1-5.6 5.6z" fill="#f5bb4a"/><path d="M329.4 1013.7l.9-.9 2.1 2.1-.9.9z" fill="#e8404a"/><path d="M323.8 1019.3l-.8 2.8 2.9-.7z" fill="#666"/>
<path d="M339 1018h9.5l2.8-2.6v3l-2.6 2.3H339z" fill="#cdcdcd"/><path d="M339 1008h9.5v10H339z" fill="#66ade6"/><path d="M339 1008l3-2.8h9.3l-2.8 2.8z" fill="#8ecbf6"/><path d="M348.5 1008l2.8-2.8v10l-2.8 2.8z" fill="#4a90cf"/><path d="M353.7 1018v-9.5" stroke="#222" stroke-width="1.1"/><path d="M351.9 1009.3l1.8-3 1.8 3z" fill="#222"/>
<path d="M363.6 1011.2h10.5v9.2h-10.5z" fill="#d6d6d6"/><path d="M363.8 1011l3.4-3.4h6.2l-.3 3.4z" fill="#f6f6f6"/><path d="M374.1 1011.3l2.6-.3v6l-2.6 3z" fill="#bcbcbc"/><path d="M363.3 1020.4v-9.3l3.5-3.6h4" fill="none" stroke="#505050" stroke-width="1.05"/><path d="M363.3 1020.4h10.2l3.3-3.3v-4.5" fill="none" stroke="#505050" stroke-width="1.05"/><use href="#star" transform="translate(374.5 1009.6) scale(.5)"/>
<path d="M390 1006.6h9.5M388.2 1009v8.5M401 1009v3M390 1019.3h4.3" stroke="#505050" stroke-width="1"/><g fill="#1a8cff"><rect x="387" y="1005.4" width="2.5" height="2.5"/><rect x="400" y="1005.4" width="2.5" height="2.5"/><rect x="387" y="1018.2" width="2.5" height="2.5"/></g><path d="M395.8 1019.3l5.6-5.6 2.1 2.1-5.6 5.6z" fill="#f5bb4a"/><path d="M401.4 1013.7l.9-.9 2.1 2.1-.9.9z" fill="#e8404a"/><path d="M395.8 1019.3l-.8 2.8 2.9-.7z" fill="#666"/>
<path d="M411 1018h9.5l2.8-2.6v3l-2.6 2.3H411z" fill="#cdcdcd"/><path d="M411 1008h9.5v10H411z" fill="#66ade6"/><path d="M411 1008l3-2.8h9.3l-2.8 2.8z" fill="#8ecbf6"/><path d="M420.5 1008l2.8-2.8v10l-2.8 2.8z" fill="#4a90cf"/><path d="M425.7 1018v-9.5" stroke="#222" stroke-width="1.1"/><path d="M423.9 1009.3l1.8-3 1.8 3z" fill="#222"/>
<path d="M435.6 1011.2h10.5v9.2h-10.5z" fill="#d6d6d6"/><path d="M435.8 1011l3.4-3.4h6.2l-.3 3.4z" fill="#f6f6f6"/><path d="M446.1 1011.3l2.6-.3v6l-2.6 3z" fill="#bcbcbc"/><path d="M435.3 1020.4v-9.3l3.5-3.6h4" fill="none" stroke="#505050" stroke-width="1.05"/><path d="M435.3 1020.4h10.2l3.3-3.3v-4.5" fill="none" stroke="#505050" stroke-width="1.05"/><use href="#star" transform="translate(446.5 1009.6) scale(.5)"/>
<path d="M462 1006.6h9.5M460.2 1009v8.5M473 1009v3M462 1019.3h4.3" stroke="#505050" stroke-width="1"/><g fill="#1a8cff"><rect x="459" y="1005.4" width="2.5" height="2.5"/><rect x="472" y="1005.4" width="2.5" height="2.5"/><rect x="459" y="1018.2" width="2.5" height="2.5"/></g><path d="M467.8 1019.3l5.6-5.6 2.1 2.1-5.6 5.6z" fill="#f5bb4a"/><path d="M473.4 1013.7l.9-.9 2.1 2.1-.9.9z" fill="#e8404a"/><path d="M467.8 1019.3l-.8 2.8 2.9-.7z" fill="#666"/>
<path d="M483 1018h9.5l2.8-2.6v3l-2.6 2.3H483z" fill="#cdcdcd"/><path d="M483 1008h9.5v10H483z" fill="#66ade6"/><path d="M483 1008l3-2.8h9.3l-2.8 2.8z" fill="#8ecbf6"/><path d="M492.5 1008l2.8-2.8v10l-2.8 2.8z" fill="#4a90cf"/><path d="M497.7 1018v-9.5" stroke="#222" stroke-width="1.1"/><path d="M495.9 1009.3l1.8-3 1.8 3z" fill="#222"/>
<path d="M507.6 1011.2h10.5v9.2h-10.5z" fill="#d6d6d6"/><path d="M507.8 1011l3.4-3.4h6.2l-.3 3.4z" fill="#f6f6f6"/><path d="M518.1 1011.3l2.6-.3v6l-2.6 3z" fill="#bcbcbc"/><path d="M507.3 1020.4v-9.3l3.5-3.6h4" fill="none" stroke="#505050" stroke-width="1.05"/><path d="M507.3 1020.4h10.2l3.3-3.3v-4.5" fill="none" stroke="#505050" stroke-width="1.05"/><use href="#star" transform="translate(518.5 1009.6) scale(.5)"/>
<path d="M534 1006.6h9.5M532.2 1009v8.5M545 1009v3M534 1019.3h4.3" stroke="#505050" stroke-width="1"/><g fill="#1a8cff"><rect x="531" y="1005.4" width="2.5" height="2.5"/><rect x="544" y="1005.4" width="2.5" height="2.5"/><rect x="531" y="1018.2" width="2.5" height="2.5"/></g><path d="M539.8 1019.3l5.6-5.6 2.1 2.1-5.6 5.6z" fill="#f5bb4a"/><path d="M545.4 1013.7l.9-.9 2.1 2.1-.9.9z" fill="#e8404a"/><path d="M539.8 1019.3l-.8 2.8 2.9-.7z" fill="#666"/>
<path d="M555 1018h9.5l2.8-2.6v3l-2.6 2.3H555z" fill="#cdcdcd"/><path d="M555 1008h9.5v10H555z" fill="#66ade6"/><path d="M555 1008l3-2.8h9.3l-2.8 2.8z" fill="#8ecbf6"/><path d="M564.5 1008l2.8-2.8v10l-2.8 2.8z" fill="#4a90cf"/><path d="M569.7 1018v-9.5" stroke="#222" stroke-width="1.1"/><path d="M567.9 1009.3l1.8-3 1.8 3z" fill="#222"/>
<path d="M579.5999999999999 1011.2h10.5v9.2h-10.5z" fill="#d6d6d6"/><path d="M579.8 1011l3.4-3.4h6.2l-.3 3.4z" fill="#f6f6f6"/><path d="M590.0999999999999 1011.3l2.6-.3v6l-2.6 3z" fill="#bcbcbc"/><path d="M579.3 1020.4v-9.3l3.5-3.6h4" fill="none" stroke="#505050" stroke-width="1.05"/><path d="M579.3 1020.4h10.2l3.3-3.3v-4.5" fill="none" stroke="#505050" stroke-width="1.05"/><use href="#star" transform="translate(590.5 1009.6) scale(.5)"/>
<path d="M606 1006.6h9.5M604.2 1009v8.5M617 1009v3M606 1019.3h4.3" stroke="#505050" stroke-width="1"/><g fill="#1a8cff"><rect x="603" y="1005.4" width="2.5" height="2.5"/><rect x="616" y="1005.4" width="2.5" height="2.5"/><rect x="603" y="1018.2" width="2.5" height="2.5"/></g><path d="M611.8 1019.3l5.6-5.6 2.1 2.1-5.6 5.6z" fill="#f5bb4a"/><path d="M617.4 1013.7l.9-.9 2.1 2.1-.9.9z" fill="#e8404a"/><path d="M611.8 1019.3l-.8 2.8 2.9-.7z" fill="#666"/>
<path d="M627 1018h9.5l2.8-2.6v3l-2.6 2.3H627z" fill="#cdcdcd"/><path d="M627 1008h9.5v10H627z" fill="#66ade6"/><path d="M627 1008l3-2.8h9.3l-2.8 2.8z" fill="#8ecbf6"/><path d="M636.5 1008l2.8-2.8v10l-2.8 2.8z" fill="#4a90cf"/><path d="M641.7 1018v-9.5" stroke="#222" stroke-width="1.1"/><path d="M639.9 1009.3l1.8-3 1.8 3z" fill="#222"/>
<path d="M155.5 1029.6H635" stroke="#c8c8c8" stroke-width="1.7"/>
<path d="M155.8 1024v5" stroke="#c6c6c6" stroke-width="1.4"/>
<path d="M179.8 1024v5" stroke="#c6c6c6" stroke-width="1.4"/>
<path d="M203.8 1024v5" stroke="#c6c6c6" stroke-width="1.4"/>
<path d="M227.8 1024v5" stroke="#c6c6c6" stroke-width="1.4"/>
<path d="M251.8 1024v5" stroke="#c6c6c6" stroke-width="1.4"/>
<path d="M275.8 1024v5" stroke="#c6c6c6" stroke-width="1.4"/>
<path d="M299.8 1024v5" stroke="#c6c6c6" stroke-width="1.4"/>
<path d="M323.8 1024v5" stroke="#c6c6c6" stroke-width="1.4"/>
<path d="M347.8 1024v5" stroke="#c6c6c6" stroke-width="1.4"/>
<path d="M371.8 1024v5" stroke="#c6c6c6" stroke-width="1.4"/>
<path d="M395.8 1024v5" stroke="#c6c6c6" stroke-width="1.4"/>
<path d="M419.8 1024v5" stroke="#c6c6c6" stroke-width="1.4"/>
<path d="M443.8 1024v5" stroke="#c6c6c6" stroke-width="1.4"/>
<path d="M467.8 1024v5" stroke="#c6c6c6" stroke-width="1.4"/>
<path d="M491.8 1024v5" stroke="#c6c6c6" stroke-width="1.4"/>
<path d="M515.8 1024v5" stroke="#c6c6c6" stroke-width="1.4"/>
<path d="M539.8 1024v5" stroke="#c6c6c6" stroke-width="1.4"/>
<path d="M563.8 1024v5" stroke="#c6c6c6" stroke-width="1.4"/>
<path d="M587.8 1024v5" stroke="#c6c6c6" stroke-width="1.4"/>
<path d="M611.8 1024v5" stroke="#c6c6c6" stroke-width="1.4"/>
<path d="M635.8 1024v5" stroke="#c6c6c6" stroke-width="1.4"/>
<path d="M641 997.5h12l-2 4.5-3 2.5v23h-2v-23l-3-2.5z" fill="#555"/>
<g fill="#a0a0a0"><circle cx="1180" cy="1014" r="6"/><rect x="1178.4" y="1006" width="3.2" height="4" transform="rotate(0 1180 1014)"/><rect x="1178.4" y="1006" width="3.2" height="4" transform="rotate(45 1180 1014)"/><rect x="1178.4" y="1006" width="3.2" height="4" transform="rotate(90 1180 1014)"/><rect x="1178.4" y="1006" width="3.2" height="4" transform="rotate(135 1180 1014)"/><rect x="1178.4" y="1006" width="3.2" height="4" transform="rotate(180 1180 1014)"/><rect x="1178.4" y="1006" width="3.2" height="4" transform="rotate(225 1180 1014)"/><rect x="1178.4" y="1006" width="3.2" height="4" transform="rotate(270 1180 1014)"/><rect x="1178.4" y="1006" width="3.2" height="4" transform="rotate(315 1180 1014)"/></g><circle cx="1180" cy="1014" r="2.6" fill="#f2f2f2"/>
<path d="M489 975.8c-3.2-.8-4.2-2.6-.8-3.9 4-1.5 10-1.5 12.2.2 1.3 1-.2 2.6-3 3.3" fill="none" stroke="#333" stroke-width="1.2"/>
<path d="M486.5 976.3l3.2-2.8v5.5z" fill="#333"/>
<path d="M492 981.5v-12.5h-2.3l3.8-4.3 3.8 4.3h-2.3v12.5z" fill="#fff" stroke="#333" stroke-width=".9" stroke-linejoin="round"/>
<path d="M506.5 971h6l-3 3.8z" fill="#333"/>
<path d="M617 971h6l-3 3.8z" fill="#333"/>
<path d="M647 971h6l-3 3.8z" fill="#333"/>
<path d="M678 971h6l-3 3.8z" fill="#333"/>
<path d="M709 971h6l-3 3.8z" fill="#333"/>
<rect x="518.5" y="970.5" width="15" height="10" fill="#f6f6f6" stroke="#444" stroke-width="1.1"/><rect x="521.5" y="973.5" width="9" height="4" fill="#a9b0c0" stroke="#444" stroke-width=".7"/><path d="M519.5 970l3.5-4 1 2 3-1.5 1 1 3-2v4.5" fill="none" stroke="#555" stroke-width="1"/>
<path d="M548.8 981.2c-1.5-1.6-3.4-3.6-4.4-5.2-.6-1 .3-1.8 1.2-1.2l2.2 1.9v-8.5c0-1.3 2-1.3 2 0v5.2v-6.6c0-1.3 2-1.3 2 0v6.6v-6c0-1.3 2-1.3 2 0v6.2v-4.5c0-1.3 2-1.3 2 0v4.8v-2.8c0-1.3 2-1.3 2 0v5.6c0 2.5-1 4.5-2.3 6.3z" fill="#f6f6f6" stroke="#333" stroke-width=".95" stroke-linejoin="round"/>
<circle cx="575.5" cy="972.2" r="5.2" fill="#dfeef0" stroke="#333" stroke-width="1.3"/><path d="M579.3 976l4 4" stroke="#333" stroke-width="2.2"/><path d="M582 969h4.5M584.2 966.5v4.5M582 973h4.5" stroke="#333" stroke-width=".9"/>
<circle cx="602.5" cy="971.5" r="6" fill="#f4f4f4" stroke="#333" stroke-width="1.3"/><rect x="599" y="968" width="7" height="7" fill="#e0e4ea" stroke="#333" stroke-width=".9"/><path d="M607 976l4 4" stroke="#333" stroke-width="2.2"/>
<rect x="629.5" y="965.5" width="15" height="12" rx="1.5" fill="#fff" stroke="#444" stroke-width="1"/><rect x="631.5" y="967.5" width="11" height="8" fill="#9ec0ea" stroke="#2c4f8a" stroke-width=".8"/><path d="M635 978h4.5l1 2.5h-6.5z" fill="#fff" stroke="#444" stroke-width=".8"/>
<defs><linearGradient id="gr" x1="0" y1="0" x2="0" y2="1"><stop offset="0" stop-color="#9a9a9a"/><stop offset="1" stop-color="#5a5a5a"/></linearGradient></defs><rect x="660.5" y="965.5" width="15.5" height="15.5" rx="1.5" fill="url(#gr)" stroke="#555" stroke-width="1"/><rect x="661.70" y="966.70" width="2" height="2" fill="#fff"/><rect x="664.65" y="966.70" width="2" height="2" fill="#fff"/><rect x="667.60" y="966.70" width="2" height="2" fill="#fff"/><rect x="670.55" y="966.70" width="2" height="2" fill="#fff"/><rect x="673.50" y="966.70" width="2" height="2" fill="#fff"/><rect x="661.70" y="969.65" width="2" height="2" fill="#fff"/><rect x="664.65" y="969.65" width="2" height="2" fill="#fff"/><rect x="667.60" y="969.65" width="2" height="2" fill="#fff"/><rect x="670.55" y="969.65" width="2" height="2" fill="#fff"/><rect x="673.50" y="969.65" width="2" height="2" fill="#fff"/><rect x="661.70" y="972.60" width="2" height="2" fill="#fff"/><rect x="664.65" y="972.60" width="2" height="2" fill="#fff"/><rect x="667.60" y="972.60" width="2" height="2" fill="#fff"/><rect x="670.55" y="972.60" width="2" height="2" fill="#fff"/><rect x="673.50" y="972.60" width="2" height="2" fill="#fff"/><rect x="661.70" y="975.55" width="2" height="2" fill="#fff"/><rect x="664.65" y="975.55" width="2" height="2" fill="#fff"/><rect x="667.60" y="975.55" width="2" height="2" fill="#fff"/><rect x="670.55" y="975.55" width="2" height="2" fill="#fff"/><rect x="673.50" y="975.55" width="2" height="2" fill="#fff"/><rect x="661.70" y="978.50" width="2" height="2" fill="#fff"/><rect x="664.65" y="978.50" width="2" height="2" fill="#fff"/><rect x="667.60" y="978.50" width="2" height="2" fill="#fff"/><rect x="670.55" y="978.50" width="2" height="2" fill="#fff"/><rect x="673.50" y="978.50" width="2" height="2" fill="#fff"/><g fill="#b9cfee" stroke="#2e4d8c" stroke-width="1.2"><rect x="691.5" y="966.5" width="6.5" height="6" rx=".8"/><rect x="699" y="966.5" width="6.5" height="6" rx=".8"/><rect x="691.5" y="973.5" width="6.5" height="6" rx=".8"/><rect x="699" y="973.5" width="6.5" height="6" rx=".8"/></g>
</svg>
</body></html>
